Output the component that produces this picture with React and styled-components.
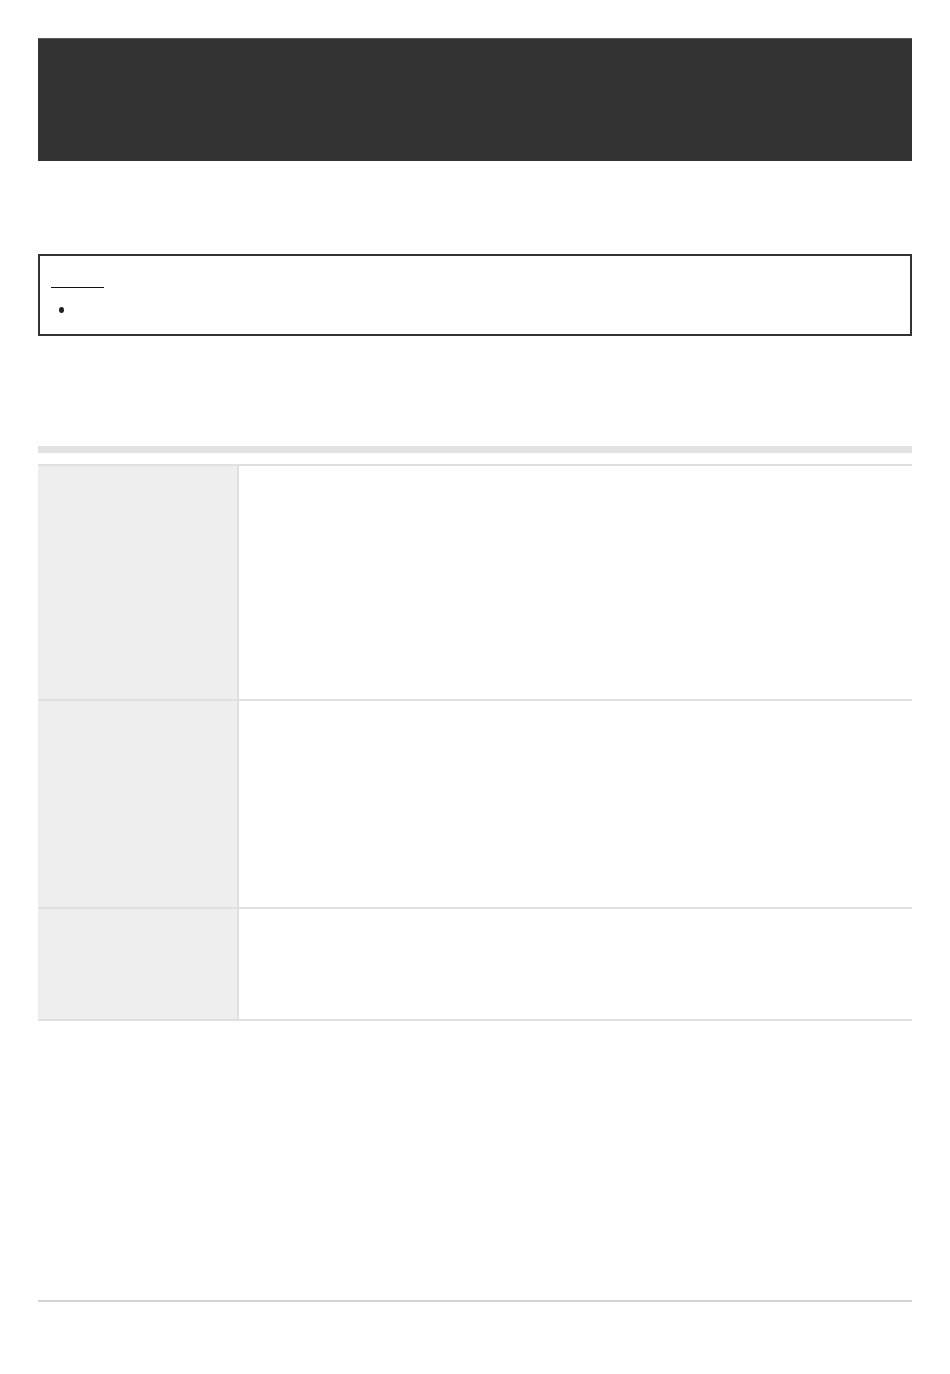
import React from "react";
import styled, { createGlobalStyle } from "styled-components";

const Global = createGlobalStyle`
  html, body { margin: 0; padding: 0; background: #ffffff; }
  body { font-family: "Open Sans", "Liberation Sans", sans-serif; color: #333; }
  * { box-sizing: border-box; }
`;

const Page = styled.div`
  padding: 38px 38px 0;
  min-height: 1374px;
  display: flex;
  flex-direction: column;
`;

const Hero = styled.header`
  height: 123px;
  background: #333333;
  border-top: 1px solid #5a5a5a;
`;

const Notice = styled.section`
  margin-top: 93px;
  height: 82px;
  border: 2px solid #333333;
  padding: 31px 10px 0 11px;
  display: flex;
  flex-direction: column;
`;

const NoticeTitle = styled.span`
  display: block;
  width: 53px;
  height: 1px;
  background: #111;
`;

const BulletList = styled.ul`
  margin: 0;
  padding: 0;
  list-style: none;
  margin-top: 18px;
`;

const BulletItem = styled.li`
  display: flex;
  align-items: center;
  padding-left: 8px;
  height: 8px;
  &::before {
    content: "";
    width: 5px;
    height: 6px;
    border-radius: 50%;
    background: #222;
  }
`;

const Divider = styled.div`
  margin-top: 110px;
  height: 7px;
  background: #e2e2e2;
`;

const Table = styled.div`
  margin-top: 11px;
  border-top: 2px solid #dde1e6;
  display: flex;
  flex-direction: column;
`;

const Row = styled.div`
  display: grid;
  grid-template-columns: 201px 1fr;
  height: ${(p) => p.$h}px;
  border-bottom: 2px solid #dde1e6;
`;

const LabelCell = styled.div`
  background: #eeeeee;
  border-right: 2px solid #dde1e6;
`;

const ValueCell = styled.div`
  background: #ffffff;
`;

const Footer = styled.footer`
  margin-top: 279px;
  border-top: 2px solid #d4d4d4;
`;

export default function App() {
  const rows = [235, 208, 112];
  return (
    <>
      <Global />
      <Page>
        <Hero />
        <Notice>
          <NoticeTitle />
          <BulletList>
            <BulletItem />
          </BulletList>
        </Notice>
        <Divider />
        <Table>
          {rows.map((h, i) => (
            <Row key={i} $h={h}>
              <LabelCell />
              <ValueCell />
            </Row>
          ))}
        </Table>
        <Footer />
      </Page>
    </>
  );
}
